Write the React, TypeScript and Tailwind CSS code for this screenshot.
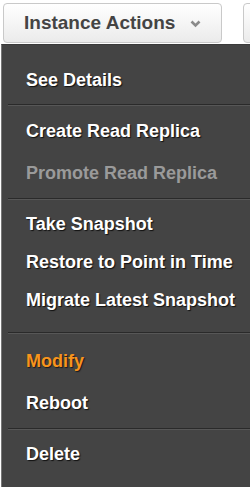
import React from 'react';

type Item = { label: string; tone?: 'normal' | 'disabled' | 'active' };

// item height and group padding differ a little per group, as on the original menu
const groups: { items: Item[]; pad: string; h: string }[] = [
  { items: [{ label: 'See Details' }], pad: 'pt-[16px] pb-[5px]', h: 'h-[38px]' },
  {
    items: [{ label: 'Create Read Replica' }, { label: 'Promote Read Replica', tone: 'disabled' }],
    pad: 'py-[4px]',
    h: 'h-[42px]',
  },
  {
    items: [
      { label: 'Take Snapshot' },
      { label: 'Restore to Point in Time' },
      { label: 'Migrate Latest Snapshot' },
    ],
    pad: 'pt-[5px] pb-[13px]',
    h: 'h-[38px]',
  },
  { items: [{ label: 'Modify', tone: 'active' }, { label: 'Reboot' }], pad: 'pt-[6px] pb-[4px]', h: 'h-[42px]' },
  { items: [{ label: 'Delete' }], pad: 'pt-[5px] pb-[9px]', h: 'h-[38px]' },
];

function MenuItem({ item, h }: { item: Item; h: string }) {
  const color =
    item.tone === 'disabled'
      ? 'text-[#9a9a9a] [text-shadow:none]'
      : item.tone === 'active'
        ? 'text-[#f7941d] [text-shadow:1px_1px_1px_#1a1a1a]'
        : 'text-white [text-shadow:1px_1px_1px_#111]';
  return (
    <div className={`${h} flex items-center pl-[24px] text-[18px] font-bold cursor-pointer ${color}`}>
      {item.label}
    </div>
  );
}

function Separator() {
  return <div className="ml-[6px] border-t border-[#2a2a2a] border-b border-b-[#575757]"></div>;
}

export default function App() {
  return (
    <div className="w-[250px] h-[487px] overflow-hidden bg-white font-['Liberation_Sans',Arial,sans-serif]">
      <div className="flex gap-[21px] pt-[3px] pl-[3px]">
        <button className="shrink-0 w-[219px] h-[40px] rounded-[4px] border border-[#c9c9c9] bg-gradient-to-b from-white to-[#ebebeb] flex items-center pl-[20px] text-[19px] font-bold text-[#444]">
          Instance Actions
          <svg className="ml-[15px] mt-[2px]" width="11" height="8" viewBox="0 0 11 8">
            <path d="M1.5 1.5 L5.5 5.5 L9.5 1.5" stroke="#8a8a8a" strokeWidth="2.6" fill="none" />
          </svg>
        </button>
        <div className="shrink-0 w-[80px] h-[40px] rounded-[4px] border border-[#c9c9c9] bg-gradient-to-b from-white to-[#ebebeb]"></div>
      </div>
      <div className="mt-[1px] ml-[1px] w-[260px] h-[500px] bg-[#444] border-l border-l-[#777] border-t border-t-[#3a3a3a]">
        {groups.map((g, i) => (
          <React.Fragment key={i}>
            {i > 0 && <Separator />}
            <div className={g.pad}>
              {g.items.map((it) => (
                <MenuItem key={it.label} item={it} h={g.h} />
              ))}
            </div>
          </React.Fragment>
        ))}
      </div>
    </div>
  );
}
